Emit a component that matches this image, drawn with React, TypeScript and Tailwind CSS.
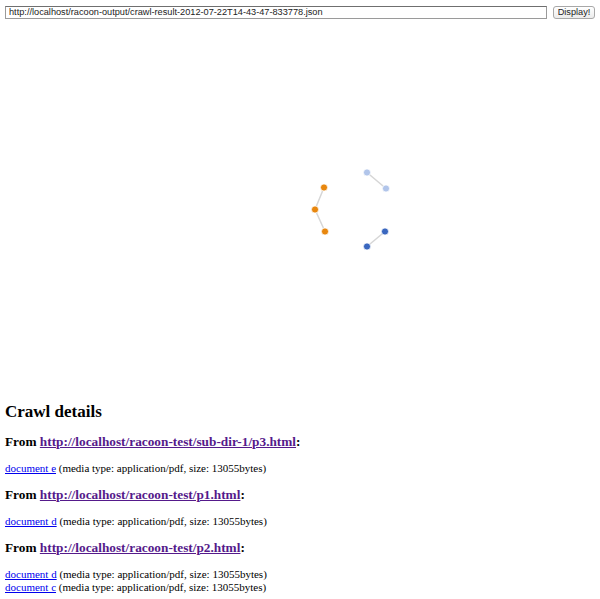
import React from 'react';

type Node = { x: number; y: number; color: string };

const nodes: Node[] = [
  { x: 324, y: 187, color: '#e8870e' },
  { x: 315, y: 209, color: '#e8870e' },
  { x: 325, y: 231, color: '#e8870e' },
  { x: 367, y: 172, color: '#b1c5ea' },
  { x: 386, y: 188, color: '#b1c5ea' },
  { x: 385, y: 231, color: '#3a67bf' },
  { x: 367, y: 246, color: '#3a67bf' },
];

const links: [number, number][] = [
  [0, 1],
  [1, 2],
  [3, 4],
  [5, 6],
];

const sections = [
  {
    from: 'http://localhost/racoon-test/sub-dir-1/p3.html',
    docs: ['document e'],
  },
  {
    from: 'http://localhost/racoon-test/p1.html',
    docs: ['document d'],
  },
  {
    from: 'http://localhost/racoon-test/p2.html',
    docs: ['document d', 'document c'],
  },
];

// force layout snapshot, coordinates are page pixels
const Graph = () => (
  <svg width={600} height={378} viewBox="0 18.5 600 378" className="block">
    {links.map(([a, b], i) => (
      <line
        key={i}
        x1={nodes[a].x}
        y1={nodes[a].y}
        x2={nodes[b].x}
        y2={nodes[b].y}
        stroke="#d6d6d6"
        strokeWidth={1.5}
      />
    ))}
    {nodes.map((n, i) => (
      <circle key={i} cx={n.x} cy={n.y} r={3.6} fill={n.color} stroke="#fff" strokeWidth={0.8} />
    ))}
  </svg>
);

export default function App() {
  return (
    <div className="min-h-screen bg-white text-black font-['Liberation_Serif',serif]">
      <div className="flex items-center gap-[6px] px-[5px] pt-[6px]">
        <input
          readOnly
          value="http://localhost/racoon-output/crawl-result-2012-07-22T14-43-47-833778.json"
          className="h-[13px] flex-1 border border-[#9a9a9a] border-t-[#6f6f6f] bg-white px-[3px] font-['Liberation_Sans',sans-serif] text-[9.2px] text-[#222] outline-none"
        />
        <button className="h-[13px] w-[42px] rounded-[3px] border border-[#a8a8a8] bg-gradient-to-b from-white to-[#ececec] font-['Liberation_Sans',sans-serif] text-[9.2px] leading-none text-[#222]">
          Display!
        </button>
      </div>

      <Graph />

      <div className="px-[5px] text-[11px] leading-[13px]">
        <h1 className="mt-[5px] mb-[12px] text-[17px] leading-[20px] font-bold">Crawl details</h1>
        {sections.map((s) => (
          <div key={s.from}>
            <h2 className="mb-[12px] text-[13.3px] leading-[16px] font-bold">
              From{' '}
              <a href="#" className="text-[#551a8b] underline">
                {s.from}
              </a>
              :
            </h2>
            <p className="mb-[12px]">
              {s.docs.map((d) => (
                <span key={d} className="block">
                  <a href="#" className="text-[#0000ee] underline">
                    {d}
                  </a>{' '}
                  (media type: application/pdf, size: 13055bytes)
                </span>
              ))}
            </p>
          </div>
        ))}
      </div>
    </div>
  );
}
